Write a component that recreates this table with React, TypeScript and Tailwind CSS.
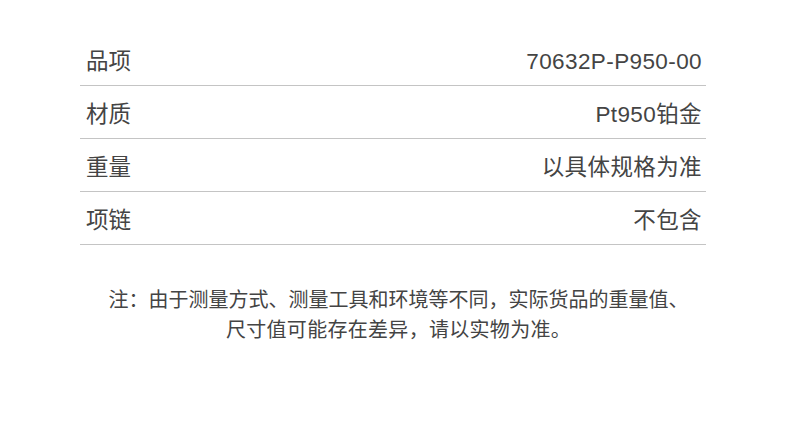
const rows = [
  ["品项", "70632P-P950-00"],
  ["材质", "Pt950铂金"],
  ["重量", "以具体规格为准"],
  ["项链", "不包含"],
];

export default function App() {
  return (
    <div
      className="w-[790px] h-[422px] bg-white text-[#444]"
      style={{ fontFamily: '"Liberation Sans", "Noto Sans CJK SC", sans-serif' }}
    >
      <div className="pt-[33px] px-[80px] w-[786px]">
        {rows.map(([k, v]) => (
          <div
            key={k}
            className="h-[53px] flex items-center justify-between border-b border-[#c4c4c4] pt-[6px] pl-[6px] pr-[4px] text-[22.5px]"
          >
            <span>{k}</span>
            <span className="tracking-[0.4px]">{v}</span>
          </div>
        ))}
      </div>
      <div className="mt-[40px] pl-[7px] text-center text-[20px] leading-[30px] text-[#444]">
        <p>注：由于测量方式、测量工具和环境等不同，实际货品的重量值、</p>
        <p className="tracking-[0.3px]">尺寸值可能存在差异，请以实物为准。</p>
      </div>
    </div>
  );
}
